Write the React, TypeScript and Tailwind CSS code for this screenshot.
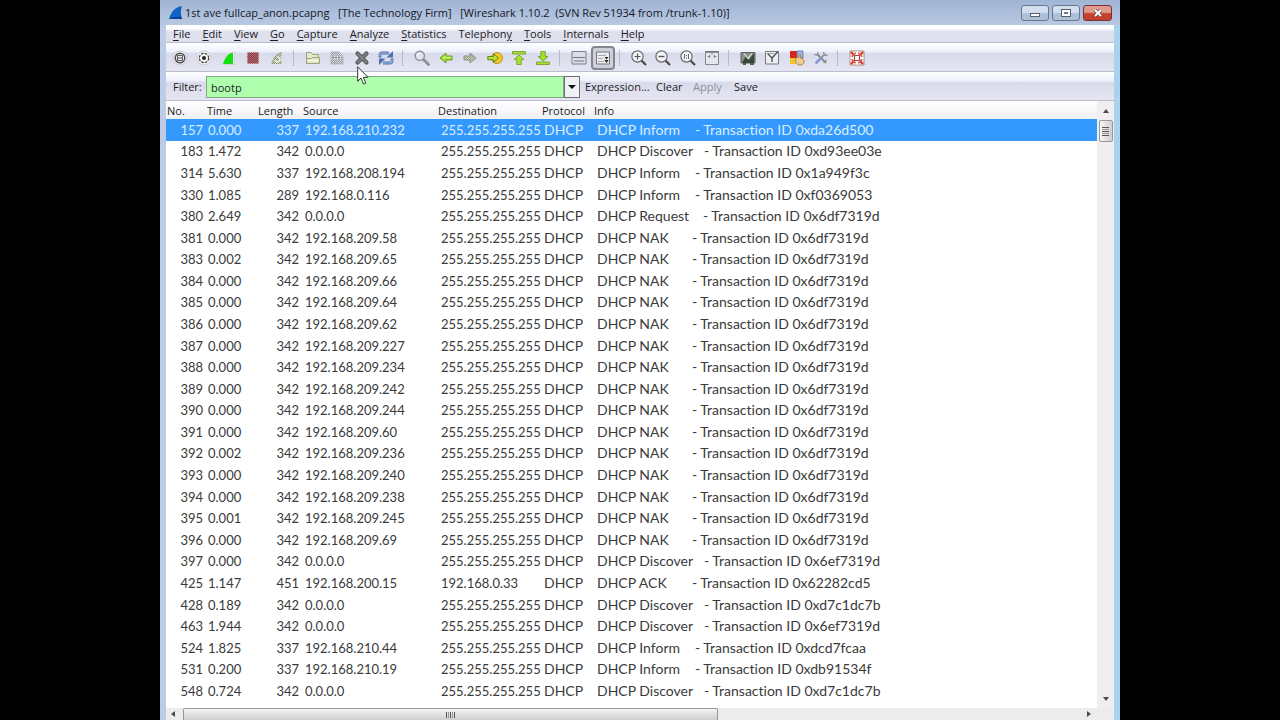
import type { ReactNode } from "react";

type MessageType = "Inform" | "Discover" | "Request" | "NAK" | "ACK";

type Packet = [no: number, time: string, length: number, source: string, message: MessageType, transaction: string, destination?: string];

const BROADCAST = "255.255.255.255";

const packets: Packet[] = [
  [157, "0.000", 337, "192.168.210.232", "Inform", "0xda26d500"],
  [183, "1.472", 342, "0.0.0.0", "Discover", "0xd93ee03e"],
  [314, "5.630", 337, "192.168.208.194", "Inform", "0x1a949f3c"],
  [330, "1.085", 289, "192.168.0.116", "Inform", "0xf0369053"],
  [380, "2.649", 342, "0.0.0.0", "Request", "0x6df7319d"],
  [381, "0.000", 342, "192.168.209.58", "NAK", "0x6df7319d"],
  [383, "0.002", 342, "192.168.209.65", "NAK", "0x6df7319d"],
  [384, "0.000", 342, "192.168.209.66", "NAK", "0x6df7319d"],
  [385, "0.000", 342, "192.168.209.64", "NAK", "0x6df7319d"],
  [386, "0.000", 342, "192.168.209.62", "NAK", "0x6df7319d"],
  [387, "0.000", 342, "192.168.209.227", "NAK", "0x6df7319d"],
  [388, "0.000", 342, "192.168.209.234", "NAK", "0x6df7319d"],
  [389, "0.000", 342, "192.168.209.242", "NAK", "0x6df7319d"],
  [390, "0.000", 342, "192.168.209.244", "NAK", "0x6df7319d"],
  [391, "0.000", 342, "192.168.209.60", "NAK", "0x6df7319d"],
  [392, "0.002", 342, "192.168.209.236", "NAK", "0x6df7319d"],
  [393, "0.000", 342, "192.168.209.240", "NAK", "0x6df7319d"],
  [394, "0.000", 342, "192.168.209.238", "NAK", "0x6df7319d"],
  [395, "0.001", 342, "192.168.209.245", "NAK", "0x6df7319d"],
  [396, "0.000", 342, "192.168.209.69", "NAK", "0x6df7319d"],
  [397, "0.000", 342, "0.0.0.0", "Discover", "0x6ef7319d"],
  [425, "1.147", 451, "192.168.200.15", "ACK", "0x62282cd5", "192.168.0.33"],
  [428, "0.189", 342, "0.0.0.0", "Discover", "0xd7c1dc7b"],
  [463, "1.944", 342, "0.0.0.0", "Discover", "0x6ef7319d"],
  [524, "1.825", 337, "192.168.210.44", "Inform", "0xdcd7fcaa"],
  [531, "0.200", 337, "192.168.210.19", "Inform", "0xdb91534f"],
  [548, "0.724", 342, "0.0.0.0", "Discover", "0xd7c1dc7b"],
];

const messageWidth: Record<MessageType, string> = {
  Inform: "w-[98px]",
  Discover: "w-[107px]",
  Request: "w-[106px]",
  NAK: "w-[95px]",
  ACK: "w-[95px]",
};

/* Menu labels as [before, mnemonic, after]. */
const menus: [string, string, string][] = [
  ["", "F", "ile"],
  ["", "E", "dit"],
  ["", "V", "iew"],
  ["", "G", "o"],
  ["", "C", "apture"],
  ["", "A", "nalyze"],
  ["", "S", "tatistics"],
  ["Telephon", "y", ""],
  ["", "T", "ools"],
  ["", "I", "nternals"],
  ["", "H", "elp"],
];

function Icon({ children }: { children: ReactNode }) {
  return (
    <svg viewBox="0 0 16 16" className="size-4" fill="none" aria-hidden="true">
      {children}
    </svg>
  );
}

function Magnifier({ children }: { children?: ReactNode }) {
  return (
    <Icon>
      <path d="M10.5 10.5L15 15" stroke="#4a4a4a" strokeWidth="2.2" />
      <circle cx="6.5" cy="6.5" r="5.6" fill="#f4f4f6" stroke="#6a6a6e" strokeWidth="1.2" />
      {children}
    </Icon>
  );
}

function Hatched({ id, color }: { id: string; color: string }) {
  return (
    <pattern id={id} width="2" height="2" patternUnits="userSpaceOnUse">
      <rect width="1" height="1" fill={color} />
      <rect x="1" y="1" width="1" height="1" fill={color} />
    </pattern>
  );
}

const icons = {
  interfaces: (
    <Icon>
      <circle cx="8" cy="8" r="7" fill="#f6f6f6" stroke="#c9c9cd" />
      <circle cx="8" cy="8" r="4.8" fill="#e9e9eb" stroke="#4b4b4b" strokeWidth="1.4" />
      <path d="M5.500 5.500h5v5h-5zM5.500 8h5" stroke="#5b5b5d" />
    </Icon>
  ),
  options: (
    <Icon>
      <circle cx="8" cy="8" r="7" fill="#f8f8f8" stroke="#c9c9cd" />
      <circle cx="8" cy="8" r="4.7" stroke="#3d3d3d" strokeWidth="1.3" strokeDasharray="2.7 1" />
      <circle cx="8" cy="8" r="2" fill="#222" />
    </Icon>
  ),
  start: (
    <Icon>
      <path d="M2 14.500C4 8 7 3 14 2C12.500 6 12.500 10 14 14.500Z" fill="#fff" stroke="#c6cfc6" strokeWidth=".8" />
      <path d="M2 14C4 8 7 3 12 2.500V14Z" fill="#14df14" />
    </Icon>
  ),
  stop: (
    <Icon>
      <defs><Hatched id="stop" color="#883f46" /></defs>
      <path d="M2.500 2.500h11v11h-11z" fill="#b3636a" />
      <path d="M2.500 2.500h11v11h-11z" fill="url(#stop)" />
    </Icon>
  ),
  restart: (
    <Icon>
      <defs><Hatched id="restart" color="#87947b" /></defs>
      <path d="M2 14C4 8 7 3 13 2C11.500 6 11.500 10 13 14Z" fill="#c9d3bb" />
      <path d="M2 14C4 8 7 3 13 2C11.500 6 11.500 10 13 14Z" fill="url(#restart)" />
      <path d="M6 10a2.500 2.500 0 1 0 2-3" stroke="#eef3e6" strokeWidth="1.400" />
    </Icon>
  ),
  open: (
    <Icon>
      <path d="M1.500 13.500v-11h4.500l1.500 2h6v9z" fill="#e6e9c9" stroke="#9ca384" />
      <path d="M1.500 13.500v-5h5l1-1h7v6z" fill="#e3e8bf" stroke="#9ca384" />
      <path d="M3 10.500h10" stroke="#fbfcef" />
    </Icon>
  ),
  save: (
    <Icon>
      <defs><Hatched id="save" color="#96989f" /></defs>
      <path d="M2 2h8l4 4v8h-12z" fill="#d9dbe0" />
      <path d="M2 2h8l4 4h-12zM2 9h12v5h-12z" fill="url(#save)" />
      <path d="M2 2h8l4 4v8h-12z" stroke="#a7a9b0" strokeWidth=".8" />
      <path d="M3 7.500h10" stroke="#777a82" strokeWidth="1.500" strokeDasharray="2 1" />
    </Icon>
  ),
  close: (
    <Icon>
      <path d="M3.500 3.500l9 9M12.500 3.500l-9 9" stroke="#55575b" strokeWidth="4.200" strokeLinecap="round" />
      <path d="M3.500 3.500l9 9M12.500 3.500l-9 9" stroke="#7f8185" strokeWidth="2" strokeLinecap="round" />
    </Icon>
  ),
  reload: (
    <Icon>
      <path d="M2 7.500V5q0-2 2-2h7" stroke="#4a6fae" strokeWidth="2.800" />
      <path d="M8.500 7.500h6.500V1z" fill="#4a6fae" />
      <path d="M14 8.500v2.500q0 2-2 2H5" stroke="#4a6fae" strokeWidth="2.800" />
      <path d="M7.500 8.500H1V15z" fill="#4a6fae" />
      <path d="M2 6.500V5q0-2 2-2h8M14 9.500v1.500q0 2-2 2H4" stroke="#a3bbe2" strokeWidth="1.200" />
    </Icon>
  ),
  find: (
    <Icon>
      <path d="M9.500 9.500L14.500 14.500" stroke="#8d8f96" strokeWidth="2.800" strokeLinecap="round" />
      <circle cx="5.800" cy="5.800" r="4.600" fill="#dfe6ee" stroke="#8b8d93" strokeWidth="1.400" />
      <path d="M3.500 5.500q.5-2 2.500-2" stroke="#fff" />
    </Icon>
  ),
  back: (
    <Icon>
      <path d="M2 8l6-5v3h6v4H8v3z" fill="#a6e02c" stroke="#6f9a2c" strokeLinejoin="round" />
      <path d="M5 7.500h8" stroke="#dcf79a" />
    </Icon>
  ),
  forward: (
    <Icon>
      <defs><Hatched id="forward" color="#94a08a" /></defs>
      <path d="M14 8L8 3v3H2v4h6v3z" fill="#c8d0bd" />
      <path d="M14 8L8 3v3H2v4h6v3z" fill="url(#forward)" stroke="#8b9383" strokeLinejoin="round" />
    </Icon>
  ),
  goto: (
    <Icon>
      <circle cx="10" cy="8" r="5.500" fill="#f3c623" stroke="#b9932d" />
      <path d="M11.500 8L6.500 3.800v2.700H.8v3.200h5.700v2.600z" fill="#b8e437" stroke="#65831d" strokeLinejoin="round" />
    </Icon>
  ),
  first: (
    <Icon>
      <path d="M1.500 1.500h13v2.500h-13z" fill="#a6e02c" stroke="#7ca832" />
      <path d="M8 5l5 4.500h-2.800v5H5.800v-5H3z" fill="#a6e02c" stroke="#7ca832" strokeLinejoin="round" />
    </Icon>
  ),
  last: (
    <Icon>
      <path d="M1.500 12h13v2.500h-13z" fill="#a6e02c" stroke="#7ca832" />
      <path d="M8 11L3 6.500h2.800v-5h4.400v5H13z" fill="#a6e02c" stroke="#7ca832" strokeLinejoin="round" />
    </Icon>
  ),
  colorize: (
    <Icon>
      <path d="M1 1.500h14v12.500H1z" fill="#dcdee8" stroke="#7c7e88" />
      <path d="M2 7.500h12" stroke="#75777f" />
      <path d="M3 11h10" stroke="#75777f" />
    </Icon>
  ),
  autoscroll: (
    <Icon>
      <path d="M1.500 2h13v12h-13z" fill="#ececef" stroke="#76787e" />
      <path d="M3 5.500h8M3 8.500h5M3 11.500h6" stroke="#a6a8af" />
      <path d="M9.500 7h4l-2 2.500zM9.500 10h4l-2 3z" fill="#222" />
    </Icon>
  ),
  zoomIn: (
    <Magnifier><path d="M3.500 6.500h6M6.500 3.500v6" stroke="#55575b" strokeWidth="1.200" /></Magnifier>
  ),
  zoomOut: (
    <Magnifier><path d="M3.500 6.500h6" stroke="#55575b" strokeWidth="1.400" /></Magnifier>
  ),
  zoomNormal: (
    <Magnifier><path d="M4.500 4v5M8.500 4v5M6.500 5v1M6.500 7.500v1" stroke="#66686e" /></Magnifier>
  ),
  resize: (
    <Icon>
      <path d="M1.500 1.500h13v13h-13z" fill="#e6e8ef" stroke="#85878d" />
      <path d="M1.500 2h13" stroke="#6a6c72" strokeWidth="1.500" />
      <path d="M8 3v2M3.500 6.500h3M5.500 5v3M9.500 6.500h3M10.500 5v3" stroke="#85888f" />
    </Icon>
  ),
  captureFilter: (
    <Icon>
      <path d="M1 2.500h14v10.500H1z" fill="#87918a" stroke="#5b605e" />
      <path d="M2 13l4-7 3 4 5-7v10z" fill="#39443b" />
      <path d="M4 3.500l4 5 4-5" stroke="#dfe5dd" strokeWidth="1.200" />
      <path d="M3 14h3M10 14h4" stroke="#3f6d45" strokeWidth="2" />
    </Icon>
  ),
  displayFilter: (
    <Icon>
      <path d="M1.500 1.500h13v12.500h-13z" fill="#eceef0" stroke="#77797e" />
      <path d="M3.500 3.500L8 8v4M8 8l6-6.500" stroke="#4d5054" strokeWidth="1.400" />
      <path d="M3 3.500h7" stroke="#9d9fa5" />
    </Icon>
  ),
  coloringRules: (
    <Icon>
      <path d="M1 1h7v7H1z" fill="#d8261c" />
      <path d="M8 1h6v7H8z" fill="#a3b5de" stroke="#5770ae" strokeWidth=".8" />
      <path d="M1 8h6v6H1z" fill="#f1c52b" />
      <path d="M7 8.500q1-2.500 3-1V4.500h1.500v3.500l2.500 1q1.500 1 1 4l-2 2H9l-2.500-3z" fill="#f0cb91" stroke="#a27a46" strokeWidth=".8" />
    </Icon>
  ),
  preferences: (
    <Icon>
      <path d="M4 4l9 9" stroke="#85898f" strokeWidth="1.800" />
      <path d="M12 4L8 8" stroke="#85898f" strokeWidth="1.600" />
      <path d="M7.500 8.500L3.500 12.500" stroke="#8d95d0" strokeWidth="2.800" strokeLinecap="round" />
      <path d="M1.500 4.500l3 .5L5 2M10.500 2l1 3 3 .5M10.500 12.500l3-2.500" stroke="#8b8f95" strokeWidth="1.300" />
    </Icon>
  ),
  help: (
    <Icon>
      <path d="M1 1h14v14H1z" fill="#fbf7f5" stroke="#b08a82" />
      <path d="M2 2l3 3M14 2l-3 3M2 14l3-3M14 14l-3-3" stroke="#d9372c" strokeWidth="2.200" />
      <circle cx="8" cy="8" r="5" stroke="#e0574c" strokeWidth="1.600" />
      <path d="M8 1.500v3.500M8 11v3.500M1.500 8H5M11 8h3.500" stroke="#fff" strokeWidth="2" />
      <path d="M5.500 5.500h5v5h-5z" fill="#fff" stroke="#a5463f" strokeWidth="1.200" />
    </Icon>
  ),
};

type IconName = keyof typeof icons;

const groups: { width: string; items: [IconName, string][] }[] = [
  {
    width: "w-[121px]",
    items: [
      ["interfaces", "List interfaces"],
      ["options", "Capture options"],
      ["start", "Start capture"],
      ["stop", "Stop capture"],
      ["restart", "Restart capture"],
    ],
  },
  {
    width: "w-[97px]",
    items: [
      ["open", "Open file"],
      ["save", "Save file"],
      ["close", "Close file"],
      ["reload", "Reload file"],
    ],
  },
  {
    width: "w-[145px]",
    items: [
      ["find", "Find packet"],
      ["back", "Go back"],
      ["forward", "Go forward"],
      ["goto", "Go to packet"],
      ["first", "First packet"],
      ["last", "Last packet"],
    ],
  },
  {
    width: "w-[48px]",
    items: [
      ["colorize", "Colorize packet list"],
      ["autoscroll", "Auto scroll"],
    ],
  },
  {
    width: "w-[97px]",
    items: [
      ["zoomIn", "Zoom in"],
      ["zoomOut", "Zoom out"],
      ["zoomNormal", "Normal size"],
      ["resize", "Resize columns"],
    ],
  },
  {
    width: "w-[97px]",
    items: [
      ["captureFilter", "Capture filters"],
      ["displayFilter", "Display filters"],
      ["coloringRules", "Coloring rules"],
      ["preferences", "Preferences"],
    ],
  },
  { width: "w-6", items: [["help", "Help contents"]] },
];

const barFill = "bg-[linear-gradient(to_bottom,#ffffff_0%,#eef2fd_30%,#d9dbea_38%,#e6e5f4_100%)]";

function TitleBar() {
  const button =
    "flex h-4 w-7 items-center justify-center rounded-[3px] border border-[#66788f] bg-linear-to-b from-[#d3dfee] from-45% to-[#adc0d8] to-55%";
  return (
    <header className="flex h-[25px] shrink-0 items-center bg-linear-to-b from-[#a0b4d4] to-[#b8c8e2] pt-px pr-2 pl-2">
      <svg viewBox="0 0 16 16" className="size-4" aria-hidden="true">
        <path d="M1 14C3 7 7 2 14 1C12.500 5 12.500 10 14 14Z" fill="#1262c4" />
        <path d="M1 14q6-3 12.500-2L14 14z" fill="#0a3f8e" />
      </svg>
      <h1 className="ml-px grow truncate text-[11px] whitespace-pre text-[#15181f]">
        {"1st ave fullcap_anon.pcapng   [The Technology Firm]   [Wireshark 1.10.2  (SVN Rev 51934 from /trunk-1.10)]"}
      </h1>
      <div className="flex gap-[3px]">
        <button type="button" aria-label="Minimize" className={button}>
          <span className="mt-1 h-1 w-[10px] border border-[#55606e] bg-white" />
        </button>
        <button type="button" aria-label="Restore" className={button}>
          <span className="flex h-2 w-[10px] items-center justify-center border border-[#55606e] bg-white">
            <span className="h-[2px] w-1 bg-[#6d7a8b]" />
          </span>
        </button>
        <button
          type="button"
          aria-label="Close"
          className="flex h-4 w-[29px] items-center justify-center rounded-[3px] border border-[#7a3038] bg-linear-to-b from-[#e0998d] from-45% to-[#c4412f] to-55%"
        >
          <svg viewBox="0 0 10 8" className="h-2 w-[10px]" aria-hidden="true">
            <path d="M2 1l6 6M8 1L2 7" stroke="#6a4444" strokeWidth="3.200" />
            <path d="M2 1l6 6M8 1L2 7" stroke="#fff" strokeWidth="2" />
          </svg>
        </button>
      </div>
    </header>
  );
}

function MenuBar() {
  return (
    <nav className="flex h-[18px] shrink-0 items-center border-b border-[#b9bccb] bg-linear-to-b from-white from-20% to-[#dfe0ee] to-40% pl-px">
      {menus.map(([before, key, after]) => (
        <button key={before + key + after} type="button" className="px-[6px] text-[11px] leading-4">
          {before}
          <span className="underline underline-offset-2">{key}</span>
          {after}
        </button>
      ))}
    </nav>
  );
}

function Toolbar() {
  return (
    <div role="toolbar" className={`flex h-[29px] shrink-0 items-center border-b border-[#b9bccb] pt-[2px] pl-[2px] ${barFill}`}>
      {groups.map((group, index) => (
        <div key={group.items[0][0]} className="flex items-center">
          {index > 0 && <span className="mr-[7px] ml-1 h-4 w-px bg-[#b9bbc9]" />}
          <div className={`flex justify-between ${group.width}`}>
            {group.items.map(([name, label]) => (
              <button
                key={name}
                type="button"
                aria-label={label}
                className={
                  name === "autoscroll"
                    ? "flex size-6 items-center justify-center rounded-[4px] border-2 border-[#83858f] bg-[#cfd0da]"
                    : "flex size-6 items-center justify-center"
                }
              >
                {icons[name]}
              </button>
            ))}
          </div>
        </div>
      ))}
    </div>
  );
}

function FilterBar() {
  return (
    <form className={`flex h-[29px] shrink-0 items-center border-b border-[#b9bccb] pt-[2px] pl-[7px] text-[11px] ${barFill}`}>
      <label htmlFor="filter" className="w-[33px]">
        Filter:
      </label>
      <input
        id="filter"
        type="text"
        defaultValue="bootp"
        className="h-[22px] w-[358px] border border-[#86a886] bg-[#afffaf] px-1 outline-none"
      />
      <button
        type="button"
        aria-label="Filter history"
        className="flex h-[22px] w-4 items-center justify-center border border-[#6d6f76] bg-[#f1f1f4]"
      >
        <svg viewBox="0 0 8 4" className="h-1 w-2" aria-hidden="true">
          <path d="M0 0h8L4 4z" fill="#111" />
        </svg>
      </button>
      <button type="button" className="ml-[5px] w-[60px] text-left">Expression...</button>
      <button type="button" className="ml-[11px] w-[26px] text-left">Clear</button>
      <button type="button" disabled className="ml-[11px] w-[29px] text-left text-[#8e8f98]">Apply</button>
      <button type="button" className="ml-3 text-left">Save</button>
    </form>
  );
}

function PacketTable() {
  return (
    <table className="h-full w-full table-fixed border-collapse">
      <colgroup>
        <col className="w-10" />
        <col className="w-[51px]" />
        <col className="w-[45px]" />
        <col className="w-[135px]" />
        <col className="w-[104px]" />
        <col className="w-[52px]" />
        <col />
      </colgroup>
      <thead>
        <tr className="h-[18px] bg-linear-to-b from-white to-[#f0f0f5] text-left text-[11px] leading-4">
          {["No.", "Time", "Length", "Source", "Destination", "Protocol", "Info"].map((name) => (
            <th key={name} scope="col" className="p-0 pt-px pl-px font-normal">
              {name}
            </th>
          ))}
        </tr>
      </thead>
      <tbody className="font-[Lato,'Liberation_Sans',sans-serif] text-sm leading-4 whitespace-pre text-[#3a3a3a] [font-variant-ligatures:none]">
        {packets.map(([no, time, length, source, message, transaction, destination], index) => (
          <tr key={no} className={index === 0 ? "bg-[#3399ff] text-[#d9eeff]" : ""}>
            <td className="p-0 pr-[3px] text-right text-[13px]">{no}</td>
            <td className="p-0 pl-[2px] text-[13px]">{time}</td>
            <td className="p-0 pr-[3px] text-right text-[13px]">{length}</td>
            <td className="p-0 pl-[3px] text-[13px]">{source}</td>
            <td className="p-0 pl-1 text-[13px]">{destination ?? BROADCAST}</td>
            <td className="p-0 pl-[3px]">DHCP</td>
            <td className="p-0 pl-1">
              <span className={`inline-block ${messageWidth[message]}`}>{`DHCP ${message}`}</span>
              {`- Transaction ID ${transaction}`}
            </td>
          </tr>
        ))}
      </tbody>
    </table>
  );
}

function Arrow({ path }: { path: string }) {
  return (
    <svg viewBox="0 0 6 6" className="size-[6px]" aria-hidden="true">
      <path d={path} fill="#4a4a4e" />
    </svg>
  );
}

export default function App() {
  return (
    <div className="h-screen overflow-hidden bg-black">
      <main className="relative mx-auto flex h-full w-3/4 flex-col bg-[#b8c8e2] font-['Open_Sans','Noto_Sans',sans-serif] text-[#1c1c22]">
        <TitleBar />
        <div className="flex min-h-0 grow flex-col border-r-6 border-l-6 border-r-[#a9d2ee] border-l-[#bccbe6]">
          <MenuBar />
          <Toolbar />
          <FilterBar />
          <div className="flex min-h-0 grow bg-white">
            <div className="min-w-0 grow pb-[6px]">
              <PacketTable />
            </div>
            <div className="flex w-[17px] shrink-0 flex-col items-center bg-[#f0eef0] pt-[7px] pb-[6px]">
              <Arrow path="M3 1l3 4H0z" />
              <span className="mt-[6px] flex h-[22px] w-[14px] flex-col items-center justify-center gap-px rounded-[2px] border border-[#98989c] bg-linear-to-r from-[#f6f6f6] to-[#cfcfd2]">
                <span className="h-px w-[7px] bg-[#55555a]" />
                <span className="h-px w-[7px] bg-[#98989c]" />
                <span className="h-px w-[7px] bg-[#55555a]" />
                <span className="h-px w-[7px] bg-[#98989c]" />
                <span className="h-px w-[7px] bg-[#55555a]" />
              </span>
              <span className="grow" />
              <Arrow path="M0 1h6L3 5z" />
            </div>
          </div>
          <div className="flex h-3 shrink-0 items-center bg-[#ececec] pr-[22px] pl-1">
            <Arrow path="M5 0v6L1 3z" />
            <span className="ml-[7px] flex h-full w-[58%] items-center justify-center gap-px rounded-t-[2px] border border-b-0 border-[#98989c] bg-linear-to-b from-[#f4f4f4] to-[#cdcdcf]">
              <span className="h-[6px] w-px bg-[#55555a]" />
              <span className="h-[6px] w-px bg-[#98989c]" />
              <span className="h-[6px] w-px bg-[#55555a]" />
              <span className="h-[6px] w-px bg-[#98989c]" />
              <span className="h-[6px] w-px bg-[#55555a]" />
            </span>
            <span className="grow" />
            <Arrow path="M1 0v6l4-3z" />
          </div>
        </div>
        <svg viewBox="0 0 12 20" className="absolute top-[66px] left-[197px] h-5 w-3" aria-hidden="true">
          <path d="M.7.800v14.500l3.300-3.200 2.500 6 2.300-1-2.500-5.800h4.700z" fill="#fff" stroke="#333" />
        </svg>
      </main>
    </div>
  );
}
